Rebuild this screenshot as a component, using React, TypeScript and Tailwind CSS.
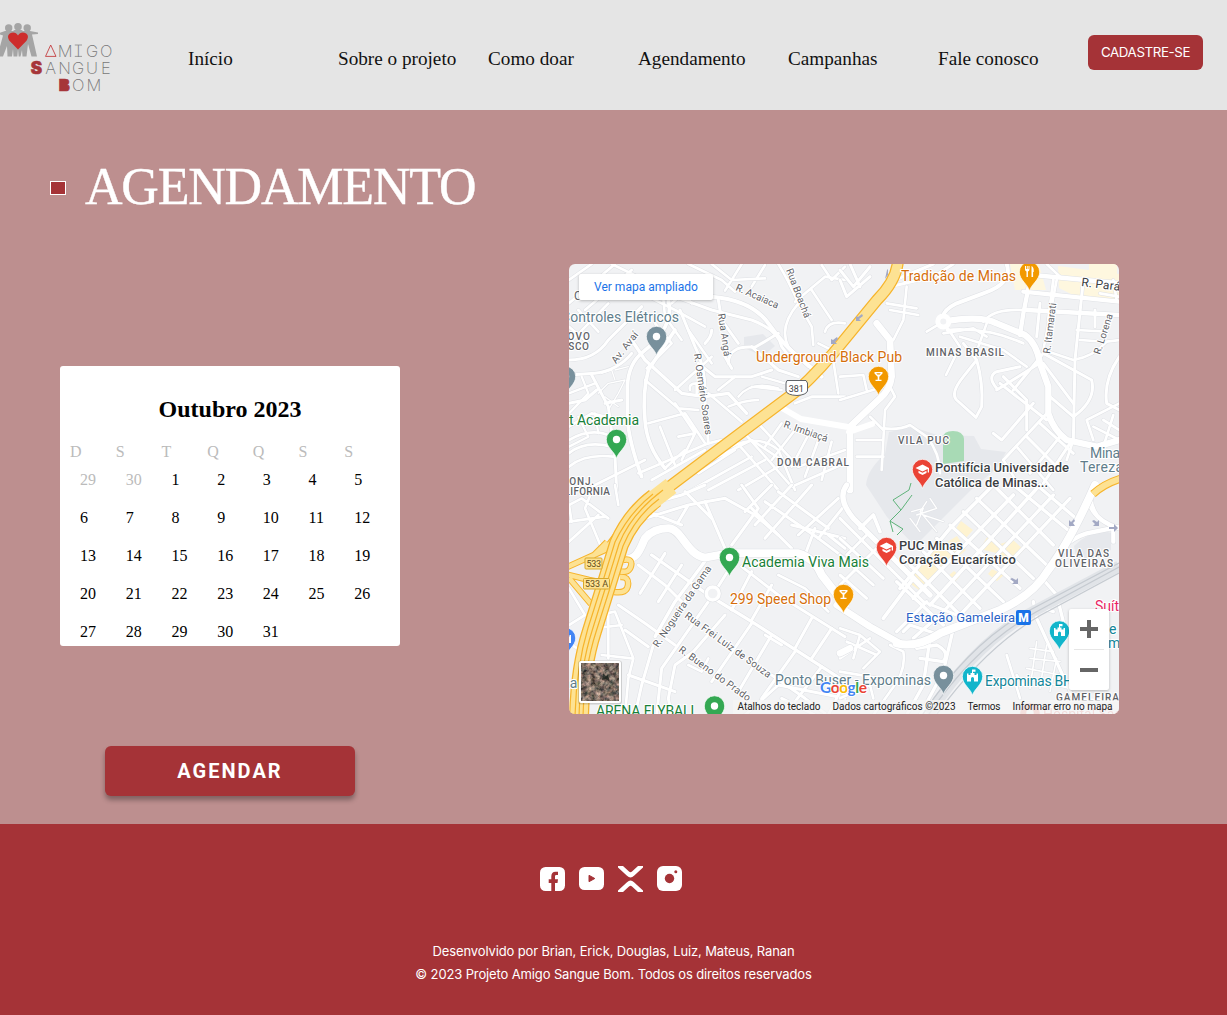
import React from 'react';

type Road = [d: string, width: number];

/* Street geometry, drawn in four tiles at three units per pixel. */
const northWest: Road[] = [
  ['M12 60L80 12M12 130L150 12M60 150L200 30M12 250L130 130M100 215L40 150M12 200L70 250', 8],
  ['M140 12L260 70M370 12L470 60L510 95M530 12L480 92M600 15L560 80M440 12L500 60L600 55', 8],
  ['M320 130L400 60M250 110L330 150L420 200M290 60L300 170L350 240M330 60L380 130', 8],
  ['M440 110Q560 120 610 190T700 290L770 350', 12],
  ['M330 110L440 150L560 180Q640 210 650 260L680 300', 9],
  ['M640 12Q670 60 700 130L740 200L745 255M690 125L780 50L840 60M740 90L800 180', 8],
  ['M700 130Q640 200 670 260L730 320M780 215Q790 180 840 190M770 15L800 60L840 20', 8],
  ['M345 150L390 260Q425 330 420 420L430 550', 9],
  ['M460 120L470 180L520 250M420 250Q440 230 440 210M490 310Q490 255 570 262L640 220', 9],
  ['M480 290L500 325M560 260L640 330L700 350M400 310L450 350L560 350L620 330', 9],
  ['M235 275Q330 200 310 120M235 275Q190 310 187 380L187 470Q190 540 230 650', 11],
  ['M330 210L250 330Q232 400 240 480Q245 560 300 625', 11],
  ['M12 300Q90 300 130 240L230 140M12 345L90 340Q160 330 200 280', 9],
  ['M200 240L240 300L350 400L420 410L490 400L545 460', 10],
  ['M240 360L340 445L400 450M245 325L320 250L270 190M330 390L440 290', 8],
  ['M375 390Q370 370 395 370L395 400M370 210L440 310M430 400L530 485M460 390L510 350', 8],
  ['M520 410Q560 360 640 385M490 440Q540 420 580 420M560 380L650 390M590 350L660 370', 7],
  ['M330 430L390 520L385 500M285 500L330 615M250 490L360 460L420 550M340 530L390 520L350 600', 8],
  ['M220 640L430 550L470 540M300 625L360 570M260 660L420 570M60 690L240 600', 8],
  ['M80 345L130 440L150 590L155 690M95 390L60 420L12 430M120 430L170 420', 9],
  ['M12 500L80 460L120 470M12 540Q80 500 140 530M12 580Q60 540 140 560M12 620Q60 580 145 590', 8],
  ['M12 460L70 400L50 350M40 470L70 530L12 560M90 460L100 520M12 400L90 370', 7],
  ['M100 400L130 370L180 360L160 400L130 450M110 340L140 330L150 360M150 330L190 320M120 410L160 440', 4],
  ['M690 430L740 410L840 410M740 330L780 310M800 270L820 400M760 250L840 290', 8],
  ['M500 530L640 690M530 510L680 680M570 480L700 620M500 560Q580 520 640 570L690 690', 8],
  ['M440 600L560 540L650 600M400 640L510 570M380 690L560 590M430 690L600 600M520 690L640 620', 8],
  ['M650 490L600 560M690 510L620 600M730 525L680 620M760 540L720 650M800 545L770 660M700 620L840 570M680 680L840 610', 8],
];

const northEast: Road[] = [
  ['M0 60L20 110L90 50M90 20L40 80L0 30M30 12L60 80M165 60L280 12M150 80L280 50L340 12', 9],
  ['M200 80L190 180L160 240M140 130L230 145M150 150L235 165M115 190L150 240', 8],
  ['M500 12Q520 70 430 100L350 130Q310 150 310 170', 12],
  ['M310 185Q420 165 470 190L555 225Q590 250 600 310L625 380L625 460Q640 510 680 540L770 560L838 540', 19],
  ['M570 60L550 160L540 225M580 45L838 70M550 95L838 125M560 150L838 165', 13],
  ['M620 12L660 50M650 60L610 270L700 300Q760 290 800 245L838 240', 8],
  ['M730 60L705 300L700 540M640 60L625 180M765 150L765 200M600 130L590 230', 9],
  ['M820 60L830 120M780 100L838 110M710 210L800 215M720 240L790 245', 8],
  ['M260 215L310 185M320 200L360 260L340 300L318 345M320 210Q440 200 550 250M310 220L400 205L440 230', 8],
  ['M360 230L490 270L560 320M430 185Q460 145 550 150M440 190L415 260', 8],
  ['M370 250L410 300Q430 370 425 440L408 472L350 420Q330 400 370 350L410 300', 9],
  ['M470 390L590 315M470 385Q440 350 470 335L540 320M480 370L620 480M490 350L560 420L560 510M610 280L520 390', 9],
  ['M610 280L755 360M610 310L700 430M755 360Q770 420 700 470L630 410M838 290Q790 360 800 430L838 450', 9],
  ['M625 455L490 600M580 430L485 540L460 520M600 490L700 580M560 530L640 610M660 530L570 640M690 550L610 670', 9],
  ['M490 600L540 680M530 560L640 690M760 540L740 480L838 430M760 500L838 540M790 480L838 510M700 540L680 600M820 465L790 560', 8],
  ['M0 350L70 345L80 390M0 420L130 380M150 380L165 410L135 450L125 630M90 470L130 510M50 540L130 540M50 590L130 590', 8],
  ['M110 190L150 240L155 350Q150 390 120 415L30 500L30 690', 20],
  ['M130 505Q180 510 210 495L260 530Q300 580 300 640', 8],
];

const southWest: Road[] = [
  ['M12 60L50 40L130 100M12 110L120 95M80 20L60 70L110 190M12 170L100 90M150 0L160 60', 8],
  ['M240 60L350 30L420 0M240 100L370 60L480 40M370 60L340 110M250 80L350 120', 9],
  ['M420 50L480 190M360 20L440 100M480 40L570 90L640 150M530 0L580 70L500 180', 9],
  ['M620 0L540 80M680 0L570 120M740 0L600 160M600 50L760 160L840 220M640 20L790 130', 9],
  ['M560 70L680 190M680 120L840 160M700 150L820 40M760 160L840 60M720 210L750 130M790 150L840 190', 9],
  ['M260 210L430 330L560 410L700 500L840 590', 10],
  ['M220 240L300 300L350 350', 9],
  ['M160 360L240 415L330 480', 9],
  ['M180 435L250 485', 9],
  ['M530 245L640 330L840 455', 9],
  ['M620 570L720 640L780 685', 9],
  ['M270 455L330 350L430 215', 10],
  ['M300 205L225 325M350 240L280 350M400 290L340 380', 9],
  ['M430 350L290 550L275 690M265 480L230 600L210 690', 9],
  ['M480 390L385 500L330 540L310 640L320 690', 9],
  ['M500 240L450 320M560 260L500 375M620 300L560 405', 9],
  ['M560 415L440 590M620 450L520 620M690 500L590 640M740 400L690 490M800 430L740 520M770 545L690 650M840 590L790 690', 9],
  ['M640 270L720 310L790 380M650 480L600 450M370 540L410 560L430 520', 8],
  ['M190 570L330 620M540 690L640 600L840 640M650 640L750 690', 9],
  ['M100 390L150 380L205 520L190 580L180 690M90 430L170 420M130 390L130 520M110 510L200 520', 8],
  ['M12 60L20 110M20 480L70 510M12 310L60 390L12 420', 8],
];

const southEast: Road[] = [
  ['M0 100L150 250L250 350L350 390M0 160L130 280M0 210L100 300M0 270L80 340M20 210L80 150M0 300L50 250L120 180', 9],
  ['M60 130L100 90L120 140M180 310L330 130L460 0M220 340L520 30M130 400L220 280M270 360L600 0', 11],
  ['M310 380L640 30M360 390L690 40M170 440L260 350M220 460L310 380', 10],
  ['M330 120L540 310M370 80L580 280M410 40L620 240M460 0L640 180M520 0L690 140M290 160L490 350', 10],
  ['M250 200L420 370M210 240L360 390M170 290L310 420M590 0L720 110M190 440L210 420L300 450', 10],
  ['M20 0Q-10 40 40 100L200 260L270 330', 16],
  ['M620 260Q660 170 740 145L838 125M750 60Q770 110 838 130M760 0Q740 50 770 90M820 130L820 170', 13],
  ['M615 290L650 330L670 410M580 350L590 400L700 640M560 390L600 365L640 380', 10],
  ['M0 430L60 450L40 520M20 470L110 510M0 520L90 460M60 450L120 500L70 550M0 560L120 580', 8],
  ['M230 490L290 480Q330 500 310 530L240 520M270 460L250 600L200 690M340 430L310 560L240 690', 10],
  ['M150 480L190 500Q200 560 150 620L100 690M0 640L90 600L100 640M500 510L540 640M530 570L550 600', 8],
  ['M570 490L640 500M570 520L660 530M560 550L660 570M560 580L690 610M590 470L570 610M620 480L600 610M650 520L630 620', 5],
  ['M215 80L250 70L230 120M230 90L290 70L270 40M250 90L310 110M260 50L240 80L290 140M210 100L240 140', 4],
];

const avenues: Road[] = [
  ['M172 225C220 225 225 190 240 160Q265 130 310 130C350 130 365 210 420 218L490 205L700 205Q750 220 770 270L840 360', 24],
];
const avenuesEast: Road[] = [
  ['M-10 360L90 425L180 475M0 505L30 490', 20],
  ['M170 475Q230 490 300 445L480 375Q580 330 625 255Q690 170 765 0', 24],
];

function Streets({ roads, x, y }: { roads: Road[]; x: number; y: number }) {
  return (
    <g transform={`translate(${x} ${y}) scale(.333333)`} fill="none" strokeLinejoin="round" strokeLinecap="round">
      {roads.map(([d, w], i) => <path key={'c' + i} d={d} stroke="#dfe1e5" strokeWidth={w + 3} />)}
      {roads.map(([d, w], i) => <path key={'r' + i} d={d} stroke="#fff" strokeWidth={w} />)}
    </g>
  );
}

interface LabelProps {
  x: number;
  y: number;
  w?: number;
  size?: number;
  color?: string;
  rotate?: number;
  weight?: number;
  children: string;
}

function Label({ x, y, w, size = 14, color = '#5f6368', rotate = 0, weight = 400, children }: LabelProps) {
  return (
    <text
      transform={`translate(${x} ${y}) rotate(${rotate})`}
      fontSize={size}
      fontWeight={weight}
      fill={color}
      textLength={w}
      stroke="#fff"
      strokeWidth="2.2"
      strokeLinejoin="round"
      paintOrder="stroke"
    >
      {children}
    </text>
  );
}

function Pin({ x, y, color, kind = 'dot' }: { x: number; y: number; color: string; kind?: 'dot' | 'bar' | 'food' | 'school' | 'tower' }) {
  return (
    <g transform={`translate(${x} ${y})`}>
      <path d="M0 19C-1.4 12.5 -10.2 8 -10.2 0A10.2 10.2 0 0 1 10.2 0C10.2 8 1.4 12.5 0 19Z" fill={color} stroke="#fff" strokeWidth=".7" />
      {kind === 'dot' && <circle r="3.7" fill="#fff" />}
      {kind === 'bar' && <path d="M-4 -4.5H4V-3L.8 .3V3.2H3V4.6H-3V3.2H-.8V.3L-4 -3ZM-2.2 -3.2L-1.2 -2.1H1.2L2.2 -3.2Z" fill="#fff" fillRule="evenodd" />}
      {kind === 'food' && <path d="M-4.5 -6V-2.5Q-4.5 -.8 -3 -.6V5H-1.6V-.6Q0 -.8 0 -2.5V-6H-1V-3H-1.8V-6H-2.7V-3H-3.5V-6ZM2 -6Q4.6 -5 4.2 0H3.6V5H2Z" fill="#fff" />}
      {kind === 'school' && <path d="M0 -5L-7 -1.5L0 2L5.2 -.6V3H6.5V-1.5ZM-4 1.2V3.5L0 5.6L4 3.5V1.2L0 3.2Z" fill="#fff" />}
      {kind === 'tower' && <path d="M-.5 -7H3V-4.8H.5V-3.5H2V-1.5H4V-3H5.5V5H1.5V2A1.5 1.5 0 0 0 -1.5 2V5H-5.5V-3H-4V-1.5H-2V-3.5H-.5Z" fill="#fff" />}
    </g>
  );
}

function MapDrawing() {
  return (
    <svg viewBox="0 0 550 450" className="block h-[450px] w-[550px]" fontFamily="Roboto, sans-serif">
      <defs>
        <filter id="terrain" x="0" y="0" width="1" height="1" colorInterpolationFilters="sRGB">
          <feTurbulence type="fractalNoise" baseFrequency=".22" numOctaves="4" seed="8" />
          <feColorMatrix values="1 0 0 0 -.02 .8 .15 0 0 -.05 .7 .15 .1 0 -.09 0 0 0 0 1" />
        </filter>
      </defs>
      <rect width="550" height="450" fill="#f1f2f4" />
      {/* campus, park and commercial blocks */}
      <path d="M320 168L344 163L368 171L405 172L412 185L437 188L428 204L402 226L346 282L318 253L297 221Q298 206 316 190Z" fill="#e6e8ec" />
      <path d="M175 73L194 70L206 82L194 92L175 84Z" fill="#e6e8ec" />
      <path d="M374 174Q374 167 384 167T395 175V197L374 200Z" fill="#a8dab5" />
      <path d="M441 0H470L477 26H446ZM489 2L550 10V37L510 34L490 24ZM520 0H548V12L520 8Z" fill="#fef7df" />
      <path d="M392 257L404 266L396 275L386 266ZM420 270L431 280L444 276L455 286L442 299L427 289L411 285ZM357 291L388 272L397 286L350 326L339 318ZM423 305L435 311L428 317L419 310ZM385 307L391 312L385 319L379 312Z" fill="#fef3d1" />
      <path d="M505 282Q525 263 542 269V286L509 302Z" fill="#e6e8ec" />

      <Streets roads={northWest} x={-4} y={-4} />
      <Streets roads={northEast} x={271} y={-4} />
      <Streets roads={southWest} x={-4} y={221} />
      <Streets roads={southEast} x={271} y={221} />
      {/* Rua Imbiaçá */}
      <path d="M206 140L232 155L285 164M303 160L280 168" fill="none" stroke="#fff" strokeWidth="6" strokeLinecap="round" strokeLinejoin="round" />

      {/* railway */}
      <g fill="none">
        <path d="M360 450C390 404 424 369 465 347L550 302" stroke="#e1e4e8" strokeWidth="11" />
        <path d="M354 450C384 404 420 368 461 346L550 299M360 450C390 406 426 371 467 348L550 303M368 450C397 410 432 374 472 351L550 309" stroke="#c6cbd1" strokeWidth="1.3" />
      </g>
      <Streets roads={avenues} x={-4} y={221} />
      <Streets roads={avenuesEast} x={271} y={221} />
      <circle cx="374.300" cy="57.500" r="5.500" fill="#f1f2f4" stroke="#fff" strokeWidth="5" />
      <circle cx="143.700" cy="329.500" r="6.500" fill="#f1f2f4" stroke="#dfe1e5" strokeWidth="4.600" />
      <circle cx="143.700" cy="329.500" r="6.500" fill="#f1f2f4" stroke="#fff" strokeWidth="3.400" />

      {/* motorway and its interchange */}
      <g fill="none" strokeLinejoin="round">
        <path d="M48 270L36 286L-4 304M-4 310L20 316L40 320M0 314L22 340M38 278L18 298M54 296Q64 294 62 302T50 307M51 313Q60 312 59 321T45 328" stroke="#f6b42c" strokeWidth="6.500" />
        <path d="M48 270L36 286L-4 304M-4 310L20 316L40 320M0 314L22 340M38 278L18 298M54 296Q64 294 62 302T50 307M51 313Q60 312 59 321T45 328" stroke="#fde293" strokeWidth="4.500" />
        <path d="M329 -4Q328 16 308 36L276 75Q252 105 229 126L153 183L96 226L80 239" stroke="#f6b42c" strokeWidth="12" />
        <path d="M329 -4Q328 16 308 36L276 75Q252 105 229 126L153 183L96 226L80 239" stroke="#fde293" strokeWidth="9.500" />
        <path d="M86 234Q62 252 50 280L37 322L23 367Q11 404 10 454" stroke="#f6b42c" strokeWidth="20" />
        <path d="M86 234Q62 252 50 280L37 322L23 367Q11 404 10 454M102 222L80 239" stroke="#fde293" strokeWidth="17.500" />
        <path d="M102 222L86 234" stroke="#fde293" strokeWidth="9" />
        <path d="M90 235Q66 253 54 282L41 324L27 368Q15 405 14 454M84 230Q60 249 46 278L33 320L19 364Q7 404 6 454M94 226Q62 250 50 280L37 322L23 367Q11 404 10 454" stroke="#f6b42c" strokeWidth="1.200" />
        <path d="M524 230Q536 219 554 214" stroke="#f6b42c" strokeWidth="8" />
        <path d="M524 230Q536 219 554 214" stroke="#fde293" strokeWidth="6" />
        <path d="M324 268L321 257L332 246L324 236L340 226L342 219M321 257L334 265L328 271M332 246L343 231" stroke="#5fb37a" strokeWidth="1" />
      </g>
      {/* one-way arrows */}
      <g fill="#a3a9c4">
        <path d="M319 5V11L316 15L318 6ZM287 57V52L289 53L293 50L294 52L290 55L292 57ZM262 80V75L264 76L268 73L269 75L266 78L268 80Z" />
        <path d="M500 262V256L502 258L505 255L506 257L504 259L506 262ZM530 262H524L526 260L523 257L525 256L528 258L530 256ZM449 320H443L445 318L441 315L443 314L447 316L449 314ZM540 263H545V260L549 264L545 268V265H540Z" />
      </g>

      {/* road shields */}
      <path d="M218 116.500H237L238.500 119V127Q237 131 228 131.500Q218 131 217 127V119Z" fill="#fff" stroke="#5f6368" />
      <text x="219.700" y="127.500" fontSize="9" textLength="15" fill="#3c4043">381</text>
      <g fill="#fde293" stroke="#d9a92c">
        <rect x="16" y="294" width="17" height="11" rx="1" />
        <rect x="14.500" y="314.500" width="26" height="10.500" rx="1" />
      </g>
      <g fontSize="9" fill="#5f4b16">
        <text x="17.500" y="303" textLength="14.500">533</text>
        <text x="16" y="323" textLength="23">533 A</text>
      </g>

      {/* street names */}
      <Label x={166} y={26} w={46} size={10} rotate={24}>R. Acaiaca</Label>
      <Label x={217} y={6} w={52} size={10} rotate={69}>Rua Boachá</Label>
      <Label x={149} y={50} w={43} size={10} rotate={82}>Rua Angá</Label>
      <Label x={125} y={90} w={82} size={10} rotate={82}>R. Osmário Soares</Label>
      <Label x={47} y={100} w={37} size={10} rotate={-52}>Av. Avaí</Label>
      <Label x={214} y={163} w={46} size={10} rotate={19}>R. Imbiaçá</Label>
      <Label x={481} y={90} w={51} size={10} rotate={-83}>R. Itamarati</Label>
      <Label x={531} y={91} w={42} size={10} rotate={-72}>R. Lorena</Label>
      <Label x={512} y={22} w={39} size={12} rotate={7} color="#3c4043">R. Pará</Label>
      <Label x={89} y={384} w={96} size={10} rotate={-56}>R. Nogueira da Gama</Label>
      <Label x={115} y={353} w={104} size={10} rotate={36}>Rua Frei Luiz de Souza</Label>
      <Label x={109} y={387} w={86} size={10} rotate={36}>R. Bueno do Prado</Label>

      {/* districts */}
      <Label x={357} y={91.500} w={78} size={10} weight={500}>MINAS BRASIL</Label>
      <Label x={329} y={179.500} w={51} size={10} weight={500}>VILA PUC</Label>
      <Label x={208} y={201.500} w={72} size={10} weight={500}>DOM CABRAL</Label>
      <Label x={-10} y={75.500} w={31} size={10} weight={500}>NOVO</Label>
      <Label x={-22} y={85.500} w={42} size={10} weight={500}>OSASCO</Label>
      <Label x={-7} y={221} w={32} size={10} weight={500}>CONJ.</Label>
      <Label x={-18} y={230.500} w={59} size={10} weight={500}>CALIFORNIA</Label>
      <Label x={489} y={292.500} w={51} size={10} weight={500}>VILA DAS</Label>
      <Label x={486} y={302.500} w={58} size={10} weight={500}>OLIVEIRAS</Label>
      <Label x={487} y={437} w={63} size={10} weight={500}>GAMELEIRA</Label>
      <Label x={5} y={36} size={12}>C</Label>

      {/* places */}
      <Label x={332} y={17} w={115} color="#d56e0c">Tradição de Minas</Label>
      <Pin x={460.500} y={8} color="#f29900" kind="food" />
      <Label x={-8} y={58} w={118} color="#607d8b">Controles Elétricos</Label>
      <Pin x={87.500} y={72.500} color="#78909c" />
      <Pin x={-3.500} y={112.500} color="#78909c" />
      <Label x={187} y={98} w={146} color="#d56e0c">Underground Black Pub</Label>
      <Pin x={309.500} y={112.500} color="#f29900" kind="bar" />
      <Label x={0} y={161} w={70} color="#188038">t Academia</Label>
      <Pin x={47.500} y={175.500} color="#34a853" />
      <Label x={521} y={194} w={37} color="#607d8b">Minas</Label>
      <Label x={511} y={208} w={43} color="#607d8b">Tereza</Label>
      <Pin x={353.500} y={205.500} color="#ea4335" kind="school" />
      <Label x={366} y={208} w={134} size={13} color="#3c4043" weight={500}>Pontifícia Universidade</Label>
      <Label x={366} y={222.500} w={113} size={13} color="#3c4043" weight={500}>Católica de Minas...</Label>
      <Pin x={317.500} y={283.500} color="#ea4335" kind="school" />
      <Label x={330} y={285.500} w={64} size={13} color="#3c4043" weight={500}>PUC Minas</Label>
      <Label x={330} y={299.500} w={117} size={13} color="#3c4043" weight={500}>Coração Eucarístico</Label>
      <Pin x={160.500} y={293.500} color="#34a853" />
      <Label x={173} y={303} w={127} color="#188038">Academia Viva Mais</Label>
      <Pin x={274.500} y={330.500} color="#f29900" kind="bar" />
      <Label x={161} y={340} w={101} color="#d56e0c">299 Speed Shop</Label>
      <Label x={337} y={358} w={109} size={13} color="#2b63c6">Estação Gameleira</Label>
      <rect x="447" y="346" width="15" height="15" rx="2" fill="#1a73e8" />
      <text x="449.300" y="357.800" fontSize="12" fontWeight="900" fill="#fff">M</text>
      <Label x={526} y={347} color="#e91e63">Suítes</Label>
      <Label x={540} y={370} color="#12869a">e</Label>
      <Label x={539} y={384} color="#12869a">m</Label>
      <Pin x={490.500} y={367} color="#12b5cb" kind="tower" />
      <Label x={206} y={421} w={156} color="#607d8b">Ponto Buser - Expominas</Label>
      <Pin x={374.500} y={411.500} color="#78909c" />
      <Pin x={403.500} y={412.500} color="#12b5cb" kind="tower" />
      <Label x={416} y={422} w={88} color="#12869a">Expominas BH</Label>
      <Pin x={-3.500} y={374} color="#4285f4" kind="tower" />
      <Label x={-7} y={424} size={14} color="#607d8b">na</Label>
      <Label x={27} y={452} w={102} size={14} color="#188038">ARENA FLYBALL</Label>
      <Pin x={145.500} y={442} color="#34a853" />
      <g opacity=".5">
        <Pin x={461} y={449} color="#ea4335" />
        <Label x={474} y={455} color="#d93025">Hospital São</Label>
      </g>

      {/* attribution strip */}
      <rect x="164" y="436" width="386" height="14" fill="#f5f5f5" opacity=".75" />
      <g fontSize="10" fill="#222">
        <text x="168.500" y="446.300" textLength="83">Atalhos do teclado</text>
        <text x="263.500" y="446.300" textLength="123">Dados cartográficos ©2023</text>
        <text x="398.500" y="446.300" textLength="33">Termos</text>
        <text x="443.500" y="446.300" textLength="100">Informar erro no mapa</text>
      </g>
      <text x="251" y="428.500" fontFamily="Lato, sans-serif" fontSize="15.500" fontWeight="700" textLength="47" stroke="#fff" strokeWidth="2" paintOrder="stroke">
        <tspan fill="#4285f4">G</tspan><tspan fill="#ea4335">o</tspan><tspan fill="#fbbc04">o</tspan><tspan fill="#4285f4">g</tspan><tspan fill="#34a853">l</tspan><tspan fill="#ea4335">e</tspan>
      </text>

      {/* satellite switch */}
      <rect x="9" y="396.500" width="44" height="44" rx="3" fill="#000" opacity=".15" />
      <rect x="10" y="397" width="42" height="42" rx="2" fill="#fff" />
      <rect x="12" y="399" width="38" height="38" filter="url(#terrain)" />
      <path d="M34 409L37 412L39 411L41 418L37 415L33 416Z" fill="#17211b" opacity=".8" />
    </svg>
  );
}

function Logo() {
  return (
    <svg viewBox="0 0 120 80" className="mt-[20px] block h-[80px] w-[120px]">
      <g fill="#a5a5a5">
        <circle cx="8.700" cy="8" r="3.700" />
        <circle cx="18" cy="6.800" r="3.800" />
        <circle cx="27.200" cy="8" r="3.700" />
        <path d="M-1 13L5 11H13L14.500 10H21.500L23 11H30L38 12.500V14L32 14.500L37 36.500H31.500L28 24L26.500 36.500H22.500L22 30L20.500 36.500H18.700L18 29L17.300 36.500H13.500L13 29L12 36.500H7.500L7 26L3 36.500H-1V30L3 15.500L-1 14Z" />
      </g>
      <path d="M18 29.500L9.700 21C7.500 18 7.500 15 9.800 13.500C12.800 11.500 16.300 12.200 18 15.500C19.700 12.200 23.200 11.500 26.200 13.500C28.500 15 28.500 18 26.300 21Z" fill="#cd2d2c" />
      <path d="M45.500 36.400L50.700 25L56 36.400Z" fill="none" stroke="#c43d41" strokeWidth=".9" />
      <g fontFamily="Inter, sans-serif" fontSize="16.500" fontWeight="200" fill="#777">
        <text y="36.700" x="57.800 76.200 86 100">MIGO</text>
        <text y="54" x="45.200 58.200 72 86 101">ANGUE</text>
        <text y="71.200" x="72 86.500">OM</text>
      </g>
      <path d="M74.800 25H82M74.800 36.400H82" stroke="#888" strokeWidth=".8" />
      <g fontFamily="Inter, sans-serif" fontSize="17" fontWeight="900" fill="#a63539" stroke="#a63539" strokeWidth=".6">
        <text x="30.700" y="53.800">S</text>
        <text x="58.800" y="71" fontSize="16.500">B</text>
      </g>
      <path d="M62 61H67V69H62Z" fill="#a63539" />
    </svg>
  );
}

const navItems = ['Início', 'Sobre o projeto', 'Como doar', 'Agendamento', 'Campanhas', 'Fale conosco'];
const weekDays = ['D', 'S', 'T', 'Q', 'Q', 'S', 'S'];
const days = [29, 30, ...Array.from({ length: 31 }, (_, i) => i + 1)];

export default function App() {
  return (
    <div className="flex h-[1015px] w-[1227px] flex-col overflow-hidden bg-[#bd8f8f] font-['Liberation_Serif',serif]">
      <header className="flex h-[110px] shrink-0 bg-[#e5e5e5]">
        <div className="w-[188px]"><Logo /></div>
        <nav className="flex pt-12 text-[19.2px] leading-[22px] text-[#111]">
          {navItems.map((item) => (
            <a key={item} className="w-[150px] whitespace-nowrap">{item}</a>
          ))}
        </nav>
        <button className="mt-[35px] h-[35px] w-[115px] rounded-md bg-[#a53337] font-['Inter',sans-serif] text-[13.33px] tracking-[-0.4px] text-white">
          CADASTRE-SE
        </button>
      </header>

      <main className="h-[714px] shrink-0">
        <div className="flex h-[154px] items-center pl-[50px]">
          <span className="mt-px h-[14px] w-4 border border-white bg-[#a53337]" />
          <h1 className="ml-[19px] text-[52px] leading-[60px] tracking-[-1.2px] text-white [-webkit-text-stroke:0.4px_white]">AGENDAMENTO</h1>
        </div>
        <div className="flex items-start">
          <div className="ml-[60px] mt-[102px] flex w-[340px] flex-col items-center">
            <section className="h-[280px] w-[340px] rounded-[3px] bg-white px-[10px] pt-[29px]">
              <h2 className="text-center text-2xl leading-[28px] font-bold text-black">Outubro 2023</h2>
              <div className="mt-5 grid grid-cols-7 text-base leading-[18px] text-[#bbb]">
                {weekDays.map((d, i) => <span key={i}>{d}</span>)}
              </div>
              <div className="grid grid-cols-7 text-base leading-[38px] text-black">
                {days.map((d, i) => (
                  <span key={i} className={i < 2 ? 'pl-[10px] text-[#bbb]' : 'pl-[10px]'}>{d}</span>
                ))}
              </div>
            </section>
            <button className="mt-[100px] h-[50px] w-[250px] rounded-md bg-[#a53337] font-['Roboto',sans-serif] text-[20px] font-bold tracking-[2px] text-white shadow-[0_4px_5px_rgba(0,0,0,0.32)]">
              AGENDAR
            </button>
          </div>

          <section className="relative ml-[169px] h-[450px] w-[550px] overflow-hidden rounded-md font-['Roboto',sans-serif]">
            <MapDrawing />
            <a className="absolute left-[10px] top-[10px] flex h-[26px] w-[134px] items-center justify-center rounded-xs bg-white text-[12px] text-[#1a73e8] shadow-[0_1px_3px_rgba(0,0,0,0.25)]">
              Ver mapa ampliado
            </a>
            <div className="absolute left-[500px] top-[345px] flex h-[81px] w-10 flex-col items-center rounded-xs bg-white shadow-[0_1px_3px_rgba(0,0,0,0.25)]">
              <button className="flex h-10 items-center justify-center">
                <svg viewBox="0 0 18 18" className="h-[18px] w-[18px]"><path d="M7 0H11V7H18V11H11V18H7V11H0V7H7Z" fill="#666" /></svg>
              </button>
              <span className="h-px w-[30px] bg-[#e6e6e6]" />
              <button className="flex h-10 items-center justify-center">
                <svg viewBox="0 0 18 18" className="h-[18px] w-[18px]"><path d="M0 7H18V11H0Z" fill="#666" /></svg>
              </button>
            </div>
          </section>
        </div>
      </main>

      <footer className="flex h-[191px] flex-col items-center bg-[#a53337] font-['Inter',sans-serif] text-[13px] tracking-[-0.13px] text-white">
        <div className="mt-[42px] mr-[5px] flex h-[26px] items-start gap-[14px]">
          <svg viewBox="0 0 25 25" className="h-[25px] w-[25px]">
            <rect y="1" width="25" height="24" rx="5.500" fill="#fff" />
            <path d="M11.300 25V17H8.700V13.300H11.300V10.500Q11.300 5.700 15.500 5.700H18V9H16.200Q15 9 15 10.300V13.300H18L17.500 17H15V25Z" fill="#a53337" />
          </svg>
          <svg viewBox="0 0 25 25" className="h-[25px] w-[25px]">
            <rect y="1" width="25" height="23" rx="5.500" fill="#fff" />
            <path d="M10 9.300L15.800 12.500L10 15.700Z" fill="#a53337" stroke="#a53337" strokeLinejoin="round" />
          </svg>
          <svg viewBox="0 0 25 26" className="h-[26px] w-[25px]" fill="#fff">
            <path d="M0 0H5L11 5.500Q12.500 7 14 5.500L20 0H25V1.500L16 9.800Q12.500 13 9 9.800L0 1.500Z" />
            <path d="M0 26H5L11 20.500Q12.500 19 14 20.500L20 26H25V24.500L16 16.200Q12.500 13 9 16.200L0 24.500Z" />
          </svg>
          <svg viewBox="0 0 25 25" className="h-[25px] w-[25px]">
            <rect width="25" height="25" rx="6" fill="#fff" />
            <circle cx="12.500" cy="12.500" r="4.700" fill="#a53337" />
            <circle cx="18.800" cy="5.800" r="1.500" fill="#a53337" />
          </svg>
        </div>
        <p className="mt-12 leading-[23px]">Desenvolvido por Brian, Erick, Douglas, Luiz, Mateus, Ranan</p>
        <p className="leading-[23px]">© 2023 Projeto Amigo Sangue Bom. Todos os direitos reservados</p>
      </footer>
    </div>
  );
}
